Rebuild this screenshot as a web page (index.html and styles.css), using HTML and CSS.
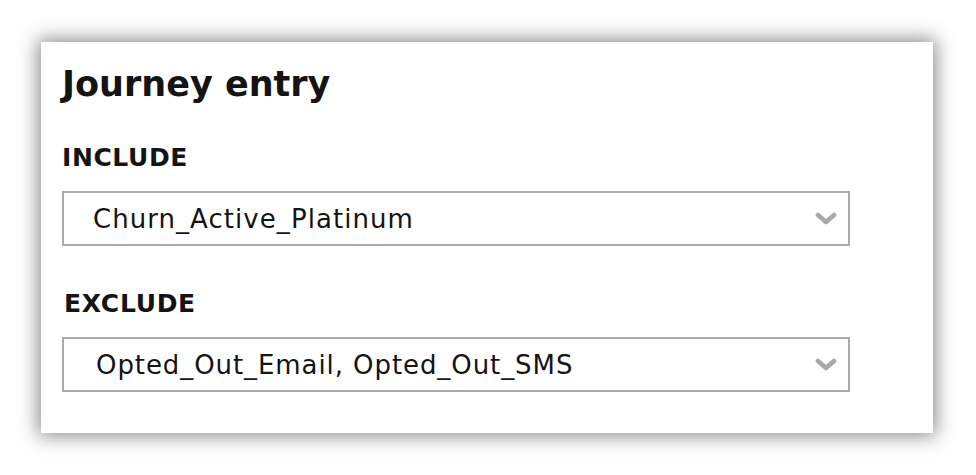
FILE: index.html
```html
<!DOCTYPE html>
<html>
<head>
<meta charset="utf-8">
<link rel="stylesheet" href="styles.css">
</head>
<body>
<div class="stage">
  <section class="card">
    <h1 class="title">Journey entry</h1>
    <div class="field">
      <div class="label">INCLUDE</div>
      <div class="select">
        <span class="value">Churn_Active_Platinum</span>
        <svg class="chev" viewBox="0 0 22 13" width="22" height="13"><path d="M3 3 L11 10 L19 3" fill="none" stroke="#a8a8a8" stroke-width="4.6" stroke-linecap="round" stroke-linejoin="round"/></svg>
      </div>
    </div>
    <div class="field field-ex">
      <div class="label label-ex">EXCLUDE</div>
      <div class="select">
        <span class="value value-ex">Opted_Out_Email, Opted_Out_SMS</span>
        <svg class="chev" viewBox="0 0 22 13" width="22" height="13"><path d="M3 3 L11 10 L19 3" fill="none" stroke="#a8a8a8" stroke-width="4.6" stroke-linecap="round" stroke-linejoin="round"/></svg>
      </div>
    </div>
  </section>
</div>
</body>
</html>
```
FILE: styles.css
```css
* { box-sizing: border-box; }
html, body { margin: 0; padding: 0; background: #ffffff; }
body { font-family: "DejaVu Sans", "Liberation Sans", sans-serif; color: #141414; }
.stage { padding: 42px 43px 42px 41px; }
.card {
  width: 892px;
  height: 391px;
  background: #fff;
  box-shadow: 0 0 18px 3px rgba(0,0,0,0.45);
  padding: 22px 0 0 21px;
  display: flex;
  flex-direction: column;
}
.title {
  margin: 0;
  font-size: 35px;
  font-weight: 700;
  line-height: 40px;
}
.field { display: flex; flex-direction: column; margin-top: 40px; }
.field-ex { margin-top: 44px; }
.label {
  font-size: 25px;
  font-weight: 700;
  line-height: 28px;
  letter-spacing: 0.6px;
}
.label-ex { padding-left: 2px; letter-spacing: 0.7px; }
.select {
  margin-top: 19px;
  width: 788px;
  height: 55px;
  border: 2px solid #ababab;
  display: flex;
  align-items: center;
  justify-content: space-between;
  padding: 0 11px 0 29px;
}
.value { font-size: 26px; font-weight: 400; color: #141414; letter-spacing: 1.05px; }
.value-ex { padding-left: 3px; letter-spacing: 0.92px; }
.chev { display: block; }
```
